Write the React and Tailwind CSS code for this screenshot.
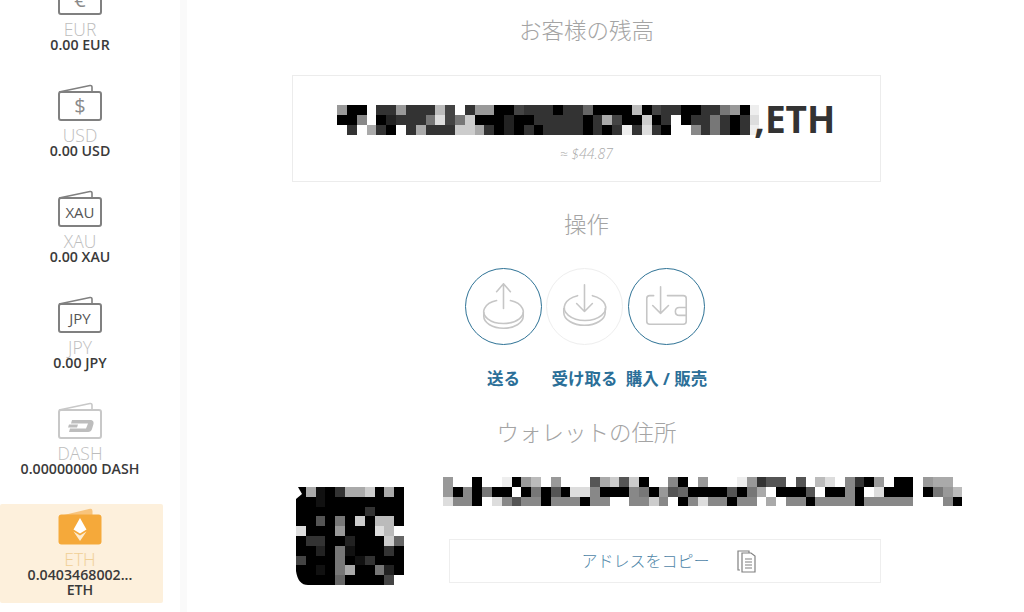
import React from "react";

const sans = "font-['Open_Sans','Noto_Sans_CJK_JP',sans-serif]";

function Mosaic({ rows, cw, ch }) {
  const cols = rows[0].length;
  return (
    <svg width={cols * cw} height={rows.length * ch} viewBox={`0 0 ${cols * cw} ${rows.length * ch}`} shapeRendering="crispEdges" className="block shrink-0">
      {rows.map((r, y) =>
        r.split("").map((c, x) => (
          <rect key={x + "-" + y} x={x * cw} y={y * ch} width={cw + 0.2} height={ch + 0.2} fill={`#${c}${c}${c}`} />
        ))
      )}
    </svg>
  );
}

function Wallet({ kind, label }) {
  const eth = kind === "eth";
  const dash = kind === "dash";
  const stroke = dash ? "#c8c8c8" : "#808080";
  return (
    <svg width="44" height="37" viewBox="0 0 44 37" className="block">
      {eth ? (
        <>
          <path d="M6 7 L32 0.8 Q34.5 0.5 34.5 3 V8 H6 Z" fill="#f8c47c" />
          <rect x="0.5" y="6.5" width="43" height="30" rx="3" fill="#f5a93a" />
          <path d="M22 10 L28.5 21.5 L22 25.5 L15.5 21.5 Z" fill="#fff" />
          <path d="M15.5 23.5 L22 27.5 L28.5 23.5 L22 33 Z" fill="#fdeccf" />
        </>
      ) : (
        <>
          <path d="M1 8 L32 1.5 Q34 1.2 34 3.2 V8" fill="none" stroke={stroke} strokeWidth="1.6" />
          <rect x="1" y="8" width="42" height="28" rx="2" fill="#fff" stroke={stroke} strokeWidth="2" />
          {dash && (
            <>
              <path d="M14 18 H32 C35 18 36 20 35.5 22 L34 27 C33.5 29 32 30 30 30 H11 L12 26.5 H28 L30 21.5 H13 Z" fill="#bdbdbd" />
              <path d="M11 22.5 H20 L19 25.5 H10 Z" fill="#bdbdbd" />
            </>
          )}
          {label && (
            <text x="22" y={label.length === 1 ? 29 : 27.5} textAnchor="middle" fill={label.length === 1 ? "#8a8a8a" : "#555"} fontSize={label.length === 1 ? 20 : 15} fontFamily="'Open Sans', sans-serif">
              {label}
            </text>
          )}
        </>
      )}
    </svg>
  );
}

function Item({ kind, glyph, name, amount, amount2, active }) {
  return (
    <div className={`h-[99px] mb-[7px] pt-[4px] pr-[3px] flex flex-col items-center rounded-[2px] ${active ? "bg-[#fdf0dc]" : ""}`}>
      <Wallet kind={kind} label={glyph} />
      <div className={`mt-[7px] text-[17.5px] leading-[15px] font-light ${active ? "text-[#f0cf95]" : "text-[#bdbdbd]"}`}>{name}</div>
      <div className="text-[14.2px] leading-[15px] font-semibold text-[#3a3a3a] whitespace-nowrap">{amount}</div>
      {amount2 && <div className="text-[14.2px] leading-[15px] font-semibold text-[#3a3a3a]">{amount2}</div>}
    </div>
  );
}

function Circle({ active, children, label, className }) {
  return (
    <div className={`w-[77px] flex flex-col items-center ${className || ""}`}>
      <div className={`w-[77px] h-[77px] rounded-full border ${active ? "border-[#2f7396]" : "border-[#eeeeee]"}`}>
        <svg width="75" height="75" viewBox="0 0 76 76" fill="none" stroke="#c6c6c6" strokeWidth="1.6" strokeLinecap="round" strokeLinejoin="round">
          {children}
        </svg>
      </div>
      <div className="mt-[22px] text-[16.5px] leading-[24px] font-bold text-[#2b6f98] whitespace-nowrap">{label}</div>
    </div>
  );
}

const balance = [
  "900f339333b4f3990043330336" + "0000b04330033790e",
  "008f023337d47c00020033" + "33303a400c03f03373" + "03d",
  "f3fa30f3a333cca3020303" + "3330303e3d30ff837303e",
];
const address = [
  "9ff0ffe09bf9fff5ac5c0ff80f9" + "fffe9355f5fbdf8309f00f9aaf",
  "9080700f07050dd800087095600" + "00507af0005f0080fd000f079b",
  "d880fd85880888088ff88c8f08d" + "88088faf8808888088888fff80",
];
const qr = [
  "0a103aac0a0",
  "00100000000",
  "00000003000",
  "005070c0bb0",
  "d0009000dbf",
  "033002000c6",
  "00207100030",
  "40007013000",
  "00107a00720",
  "0000600004f",
];

function Title({ children, className }) {
  return <h2 className={`text-center text-[22.5px] leading-[30px] font-light text-[#a4a4a4] ${className || ""}`}>{children}</h2>;
}

export default function App() {
  return (
    <div className={`${sans} h-[612px] w-[1024px] overflow-hidden bg-white flex`}>
      <aside className="w-[187px] h-[612px] shrink-0 border-r-[7px] border-[#fafafa] overflow-hidden">
        <div className="w-[163px] -mt-[26px]">
          <Item glyph="€" name="EUR" amount="0.00 EUR" />
          <Item glyph="$" name="USD" amount="0.00 USD" />
          <Item glyph="XAU" name="XAU" amount="0.00 XAU" />
          <Item glyph="JPY" name="JPY" amount="0.00 JPY" />
          <Item kind="dash" name="DASH" amount="0.00000000 DASH" />
          <Item kind="eth" name="ETH" amount="0.0403468002..." amount2="ETH" active />
        </div>
      </aside>

      <main className="pl-[105px] pt-[16px] flex-1 min-w-0">
        <div className="w-[589px]">
          <Title>お客様の残高</Title>
          <div className="mt-[29px] h-[107px] border border-[#ececec] pt-[29px] flex flex-col items-center">
            <div className="flex items-center h-[30px] pr-[1px]">
              <Mosaic rows={balance} cw={9.83} ch={9.9} />
              <span className="text-[37px] leading-[28px] h-[30px] font-bold text-[#333] -ml-[5px]">,ETH</span>
            </div>
            <div className="mt-[11px] text-[14px] leading-[16px] italic font-light text-[#aaaaaa]">≈ $44.87</div>
          </div>
          <Title className="mt-[28px]">操作</Title>
          <div className="mt-[28px] flex justify-center pr-[3px]">
            <Circle active label="送る">
              <path d="M31 32 A20 12 0 1 0 45 32" />
              <path d="M18 44 V48 A20 12 0 0 0 58 48 V44" />
              <path d="M38 40 V15 M31 23 L38 15 L45 23" />
            </Circle>
            <Circle label="受け取る" className="ml-[4px]">
              <path d="M31 27 A21 13 0 1 0 46 27" />
              <path d="M17 40 V44 A21 13 0 0 0 59 44 V40" />
              <path d="M38 16 V43 M30 35 L38 43 L46 35" />
            </Circle>
            <Circle active label="購入 / 販売" className="ml-[5px]">
              <path d="M25 27 H21 Q18 27 18 30 V53 Q18 56 21 56 H55 Q58 56 58 53 V30 Q58 27 55 27 H39" />
              <path d="M58 39 H51 Q47 39 47 43 Q47 47 51 47 H58" />
              <path d="M32 18 V45 M24 37 L32 45 L40 37" />
            </Circle>
          </div>
          <Title className="mt-[27px]">ウォレットの住所</Title>
        </div>
        <div className="mt-[29px] flex -ml-[1px]">
          <div className="relative w-[152px] h-[108px] pt-[10px] pl-[5px] shrink-0">
            <Mosaic rows={qr} cw={9.83} ch={9.8} />
            <svg width="14" height="108" viewBox="0 0 14 108" className="absolute left-[5px] top-[10px]">
              <path d="M0 0 H2 L6 7 L0 12 Z" fill="#fff" />
              <path d="M0 84 V98 H12 Q2 98 0 84 Z" fill="#fff" />
            </svg>
          </div>
          <div className="w-[521px] shrink-0">
            <Mosaic rows={address} cw={9.8} ch={9.8} />
            <button className="mt-[33px] ml-[6px] w-[432px] h-[44px] border border-[#eeeeee] flex items-center justify-center gap-[27px] pl-[7px] text-[16px] font-light text-[#4f86a8]">
              <span>アドレスをコピー</span>
              <svg width="19" height="23" viewBox="0 0 19 23" fill="none" stroke="#808080" strokeWidth="1.2">
                <path d="M3 20 H1 V1 H12 V3" />
                <path d="M5 3 H14 L18 6 V22 H5 Z" fill="#fff" />
                <path d="M8 9 H15 M8 12 H15 M8 15 H15 M8 18 H15" />
              </svg>
            </button>
          </div>
        </div>
      </main>
    </div>
  );
}
